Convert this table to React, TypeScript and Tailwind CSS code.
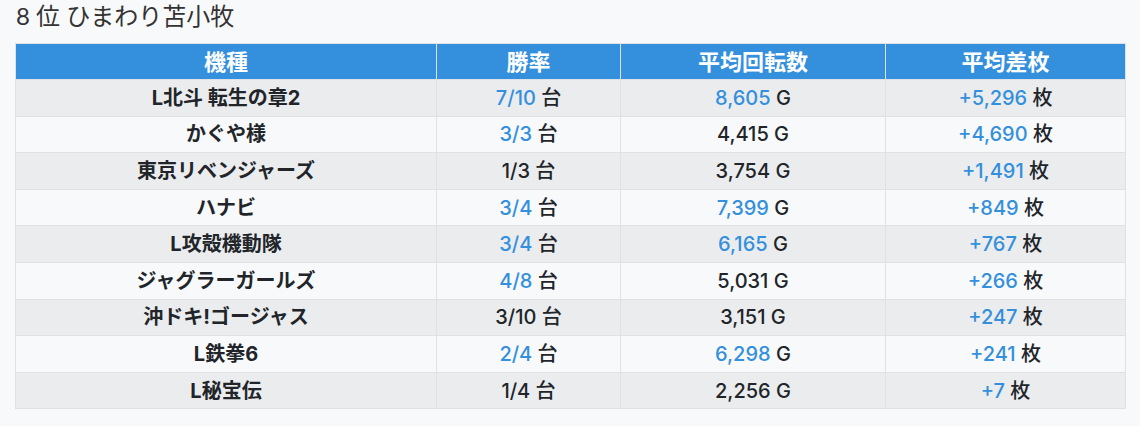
const rows = [
  { name: "L北斗 転生の章2", win: "7/10", winHi: true, spin: "8,605", spinHi: true, diff: "+5,296" },
  { name: "かぐや様", win: "3/3", winHi: true, spin: "4,415", spinHi: false, diff: "+4,690" },
  { name: "東京リベンジャーズ", win: "1/3", winHi: false, spin: "3,754", spinHi: false, diff: "+1,491" },
  { name: "ハナビ", win: "3/4", winHi: true, spin: "7,399", spinHi: true, diff: "+849" },
  { name: "L攻殻機動隊", win: "3/4", winHi: true, spin: "6,165", spinHi: true, diff: "+767" },
  { name: "ジャグラーガールズ", win: "4/8", winHi: true, spin: "5,031", spinHi: false, diff: "+266" },
  { name: "沖ドキ!ゴージャス", win: "3/10", winHi: false, spin: "3,151", spinHi: false, diff: "+247" },
  { name: "L鉄拳6", win: "2/4", winHi: true, spin: "6,298", spinHi: true, diff: "+241" },
  { name: "L秘宝伝", win: "1/4", winHi: false, spin: "2,256", spinHi: false, diff: "+7" },
];

export default function App() {
  return (
    <div className="min-h-[426px] bg-[#f8f9fb] pl-[15px] pr-[14px] font-['Inter','Noto_Sans_CJK_JP',sans-serif] text-[#212529]">
      <h2 className="h-[43px] pt-[1px] text-[24px] leading-[30px] font-normal text-[#333] pl-[1px] font-['Lato','Noto_Sans_CJK_JP',sans-serif]">8 位 ひまわり苫小牧</h2>
      <table className="w-full border-collapse text-[20px] text-center">
        <thead>
          <tr className="bg-[#3490dc] text-white text-[22px] leading-[28px]">
            <th className="w-[421px] h-[36px] border border-[#dee2e6] font-bold">機種</th>
            <th className="w-[184px] border border-[#dee2e6] font-bold">勝率</th>
            <th className="w-[265px] border border-[#dee2e6] font-bold">平均回転数</th>
            <th className="border border-[#dee2e6] font-bold">平均差枚</th>
          </tr>
        </thead>
        <tbody>
          {rows.map((r, i) => (
            <tr key={r.name} className={i % 2 === 0 ? "bg-[#ebecee]" : "bg-[#f8f9fb]"}>
              <td className="h-[36.6px] border border-[#dee2e6] font-bold">{r.name}</td>
              <td className="border border-[#dee2e6] font-medium">
                <span className={r.winHi ? "text-[#3490dc]" : ""}>{r.win}</span> 台
              </td>
              <td className="border border-[#dee2e6] font-medium">
                <span className={r.spinHi ? "text-[#3490dc]" : ""}>{r.spin}</span> G
              </td>
              <td className="border border-[#dee2e6] font-medium">
                <span className="text-[#3490dc]">{r.diff}</span> 枚
              </td>
            </tr>
          ))}
        </tbody>
      </table>
    </div>
  );
}
